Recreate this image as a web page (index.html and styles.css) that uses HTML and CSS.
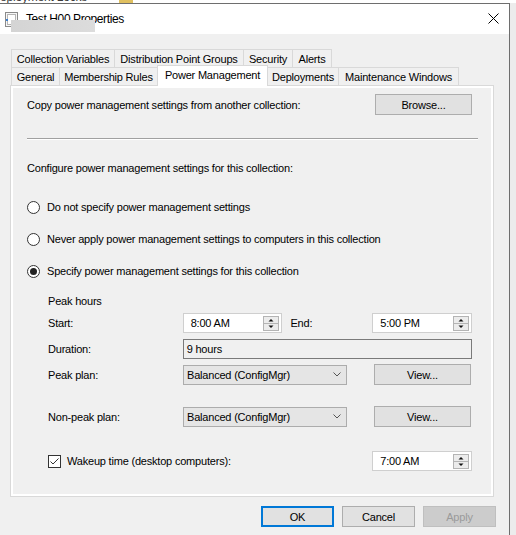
FILE: index.html
```html
<!DOCTYPE html>
<html>
<head>
<meta charset="utf-8">
<title>Properties</title>
<link rel="stylesheet" href="styles.css">
</head>
<body>
<div class="behind"><span class="behind-text">eployment Locks</span><span class="behind-icon"></span></div>
<div class="row">
  <div class="dialog">
    <div class="titlebar">
      <svg class="appicon" width="13" height="15" viewBox="0 0 13 15">
        <rect x="0.5" y="0.5" width="12" height="14" fill="#f7f7f7" stroke="#8a8a8a"/>
        <rect x="2.5" y="2.5" width="8" height="10" fill="#ffffff" stroke="#b5b5b5"/>
        <rect x="1" y="7" width="2" height="2" fill="#3c7fd0"/>
      </svg>
      <span class="title">Test H00 Properties</span>
      <svg class="close" width="11" height="11" viewBox="0 0 11 11">
        <path d="M0.5 0.5 L10.5 10.5 M10.5 0.5 L0.5 10.5" stroke="#000" stroke-width="1"/>
      </svg>
    </div>
    <div class="body">
      <div class="tabs">
        <div class="tabrow back">
          <div class="tab">Collection Variables</div>
          <div class="tab">Distribution Point Groups</div>
          <div class="tab">Security</div>
          <div class="tab last">Alerts</div>
        </div>
        <div class="tabrow front">
          <div class="tab">General</div>
          <div class="tab">Membership Rules</div>
          <div class="tab sel">Power Management</div>
          <div class="tab">Deployments</div>
          <div class="tab last">Maintenance Windows</div>
        </div>
      </div>
      <div class="panel">
        <div class="page">
          <div class="copy-row">
            <span>Copy power management settings from another collection:</span>
            <div class="btn wide">Browse...</div>
          </div>
          <div class="sep"></div>
          <div class="line cfg">Configure power management settings for this collection:</div>
          <div class="radio-row first"><span class="radio"></span><span>Do not specify power management settings</span></div>
          <div class="radio-row"><span class="radio"></span><span>Never apply power management settings to computers in this collection</span></div>
          <div class="radio-row"><span class="radio on"></span><span>Specify power management settings for this collection</span></div>
          <div class="line peak">Peak hours</div>
          <div class="frow r-start">
            <span class="flabel">Start:</span>
            <div class="spin">
              <span>8:00 AM</span>
              <svg class="spin-btns" width="16" height="15" viewBox="0 0 16 15">
                <rect x="0.5" y="0.5" width="15" height="14" fill="#ececec" stroke="#b4b4b4"/>
                <line x1="1" y1="7.5" x2="15" y2="7.5" stroke="#b4b4b4"/>
                <path d="M5.5 5.5 L10.5 5.5 L8 3 Z" fill="#111"/>
                <path d="M5.5 9.5 L10.5 9.5 L8 12 Z" fill="#111"/>
              </svg>
            </div>
            <span class="endlabel">End:</span>
            <div class="spin">
              <span>5:00 PM</span>
              <svg class="spin-btns" width="16" height="15" viewBox="0 0 16 15">
                <rect x="0.5" y="0.5" width="15" height="14" fill="#ececec" stroke="#b4b4b4"/>
                <line x1="1" y1="7.5" x2="15" y2="7.5" stroke="#b4b4b4"/>
                <path d="M5.5 5.5 L10.5 5.5 L8 3 Z" fill="#111"/>
                <path d="M5.5 9.5 L10.5 9.5 L8 12 Z" fill="#111"/>
              </svg>
            </div>
          </div>
          <div class="frow r-dur">
            <span class="flabel">Duration:</span>
            <div class="readonly">9 hours</div>
          </div>
          <div class="frow r-peak">
            <span class="flabel">Peak plan:</span>
            <div class="combo">
              <span>Balanced (ConfigMgr)</span>
              <svg width="8" height="5" viewBox="0 0 8 5"><path d="M0.5 0.5 L4 4 L7.5 0.5" fill="none" stroke="#555"/></svg>
            </div>
            <div class="btn wide view">View...</div>
          </div>
          <div class="frow r-nonpeak">
            <span class="flabel">Non-peak plan:</span>
            <div class="combo">
              <span>Balanced (ConfigMgr)</span>
              <svg width="8" height="5" viewBox="0 0 8 5"><path d="M0.5 0.5 L4 4 L7.5 0.5" fill="none" stroke="#555"/></svg>
            </div>
            <div class="btn wide view">View...</div>
          </div>
          <div class="frow r-wake">
            <div class="wake-label">
              <svg class="check" width="13" height="13" viewBox="0 0 13 13">
                <rect x="0.5" y="0.5" width="12" height="12" fill="#fff" stroke="#333"/>
                <path d="M2.5 6.5 L5 9 L10.5 3.5" fill="none" stroke="#333" stroke-width="1"/>
              </svg>
              <span>Wakeup time (desktop computers):</span>
            </div>
            <div class="spin">
              <span>7:00 AM</span>
              <svg class="spin-btns" width="16" height="15" viewBox="0 0 16 15">
                <rect x="0.5" y="0.5" width="15" height="14" fill="#ececec" stroke="#b4b4b4"/>
                <line x1="1" y1="7.5" x2="15" y2="7.5" stroke="#b4b4b4"/>
                <path d="M5.5 5.5 L10.5 5.5 L8 3 Z" fill="#111"/>
                <path d="M5.5 9.5 L10.5 9.5 L8 12 Z" fill="#111"/>
              </svg>
            </div>
          </div>
        </div>
      </div>
      <div class="buttons">
        <div class="btn dlg default">OK</div>
        <div class="btn dlg">Cancel</div>
        <div class="btn dlg disabled">Apply</div>
      </div>
    </div>
  </div>
  <div class="side"></div>
</div>
</body>
</html>
```
FILE: styles.css
```css
* { box-sizing: border-box; }
html, body { margin: 0; padding: 0; }
body {
  width: 516px;
  height: 535px;
  overflow: hidden;
  background: #e9e9e9;
  font-family: "Liberation Sans", Arial, sans-serif;
  font-size: 11px;
  letter-spacing: -0.2px;
  color: #000;
}
.behind {
  height: 3px;
  overflow: hidden;
  background: #fff;
  display: flex;
}
.behind-text {
  display: block;
  font-size: 12px;
  line-height: 12px;
  margin-top: -9px;
  color: #3a3a3a;
}
.behind-icon {
  width: 14px;
  height: 3px;
  margin-left: 32px;
  background: #e0c060;
}
.row { display: flex; height: 532px; }
.dialog {
  width: 510px;
  border-top: 1px solid #6e6e6e;
  border-right: 1px solid #6e6e6e;
  display: flex;
  flex-direction: column;
  background: #f0f0f0;
}
.side { flex: 1; background: #ececec; }
.titlebar {
  height: 30px;
  background: #fff;
  display: flex;
  align-items: center;
}
.appicon { margin-left: 5px; }
.title {
  margin-left: 8px;
  font-size: 12px;
  line-height: 14px;
  letter-spacing: -0.4px;
  position: relative;
}
.title::after {
  content: "";
  position: absolute;
  left: -15px;
  top: 8px;
  width: 84px;
  height: 12px;
  background: linear-gradient(90deg, #d4d4d4, #dcdcdc);
}
.close { margin-left: auto; margin-right: 10px; margin-top: -2px; }
.body {
  flex: 1;
  padding: 15px 15px 0 10px;
  display: flex;
  flex-direction: column;
}
.tabs { padding-left: 1px; }
.tabrow { display: grid; height: 18px; }
.tabrow.back { grid-template-columns: 103px 129px 49px 40px; }
.tabrow.front { grid-template-columns: 48px 98px 110px 71px 121px; }
.tab {
  border-top: 1px solid #d9d9d9;
  border-left: 1px solid #d9d9d9;
  background: #f0f0f0;
  display: flex;
  align-items: center;
  justify-content: center;
  white-space: nowrap;
}
.tab.last { border-right: 1px solid #d9d9d9; }
.tab.sel {
  background: #fff;
  margin: -2px -1px -1px 0;
  padding-bottom: 3px;
  border-right: 1px solid #d9d9d9;
  position: relative;
  z-index: 1;
}
.panel {
  height: 412px;
  border: 1px solid #d9d9d9;
  background: #fff;
  padding: 2px;
}
.page {
  height: 100%;
  background: #f0f0f0;
  padding: 6px 19px 0 14px;
  display: flex;
  flex-direction: column;
}
.copy-row {
  display: flex;
  justify-content: space-between;
  align-items: center;
  height: 21px;
}
.btn {
  height: 21px;
  background: #e1e1e1;
  border: 1px solid #adadad;
  display: flex;
  align-items: center;
  justify-content: center;
}
.btn.wide { width: 97px; }
.sep {
  width: 451px;
  height: 2px;
  margin-top: 23px;
  border-top: 1px solid #a0a0a0;
  border-bottom: 1px solid #fff;
}
.line { line-height: 14px; }
.cfg { margin-top: 21px; }
.radio-row {
  display: flex;
  align-items: center;
  height: 16px;
  margin-top: 16px;
}
.radio-row.first { margin-top: 24px; }
.radio {
  width: 13px;
  height: 13px;
  border: 1px solid #333;
  border-radius: 50%;
  background: #fff;
  margin-right: 7px;
  display: flex;
  align-items: center;
  justify-content: center;
}
.radio.on::after {
  content: "";
  width: 7px;
  height: 7px;
  border-radius: 50%;
  background: #222;
}
.peak { margin-top: 15px; margin-left: 21px; }
.frow {
  display: flex;
  align-items: center;
  margin-left: 21px;
}
.flabel { width: 135px; }
.r-start { margin-top: 5px; height: 20px; }
.r-dur { margin-top: 6px; height: 20px; }
.r-peak { margin-top: 5px; height: 21px; }
.r-nonpeak { margin-top: 21px; height: 21px; }
.r-wake { margin-top: 24px; height: 20px; }
.spin {
  width: 100px;
  height: 20px;
  display: flex;
  align-items: center;
  justify-content: space-between;
  background: #fff;
  border: 1px solid #cfcfcf;
  padding: 0 2px 0 7px;
}
.endlabel { width: 90px; padding-left: 8px; }
.readonly {
  width: 290px;
  height: 20px;
  border: 1px solid #7a7a7a;
  background: #f0f0f0;
  padding-left: 3px;
  display: flex;
  align-items: center;
}
.combo {
  width: 164px;
  height: 20px;
  border: 1px solid #acacac;
  background: #e5e5e5;
  padding: 0 5px 0 3px;
  display: flex;
  align-items: center;
  justify-content: space-between;
}
.view { margin-left: 27px; }
.wake-label {
  width: 325px;
  display: flex;
  align-items: center;
}
.check { margin-right: 6px; }
.buttons {
  display: flex;
  justify-content: flex-end;
  gap: 8px;
  margin-top: 9px;
  margin-right: -2px;
}
.btn.dlg { width: 73px; }
.btn.default { border: 2px solid #0078d7; }
.btn.disabled {
  background: #cccccc;
  border-color: #bfbfbf;
  color: #9a9a9a;
}
```
